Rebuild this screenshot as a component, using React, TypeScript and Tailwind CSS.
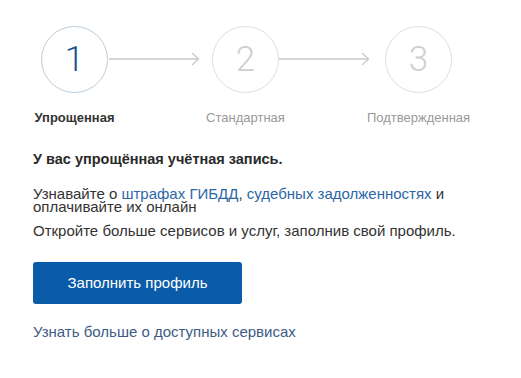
import React from "react";

function Arrow({ w }: { w: number }) {
  return (
    <svg width={w} height="14" viewBox={`0 0 ${w} 14`} className="shrink-0">
      <line x1="0" y1="7" x2={w - 1} y2="7" stroke="#c9c9c9" strokeWidth="1.3" />
      <polyline points={`${w - 8},1 ${w - 1.5},7 ${w - 8},13`} fill="none" stroke="#c9c9c9" strokeWidth="1.3" />
    </svg>
  );
}

function Step({ n, label, active }: { n: string; label: string; active?: boolean }) {
  return (
    <div className="flex flex-col items-center w-[67px] shrink-0">
      <div
        className={`w-[67px] h-[67px] rounded-full border-[1.5px] flex items-center justify-center ${
          active ? "border-[#b9cddb] text-[#17508c]" : "border-[#dedede] text-[#d0d0d0]"
        }`}
      >
        <span className="text-[35px] font-light leading-none" style={{ fontFamily: "Roboto, sans-serif" }}>
          {n}
        </span>
      </div>
      <div
        className={`mt-[17px] whitespace-nowrap text-[13px] leading-[16px] ${
          active ? "font-bold text-[#333]" : "text-[#999]"
        }`}
      >
        {label}
      </div>
    </div>
  );
}

export default function App() {
  return (
    <div className="w-[521px] h-[378px] bg-white" style={{ fontFamily: '"Liberation Sans", Arial, sans-serif' }}>
      <div className="pt-[26px] pl-[41px] flex items-start">
        <Step n="1" label="Упрощенная" active />
        <div className="mt-[26px] ml-[1px]">
          <Arrow w={91} />
        </div>
        <div className="ml-[12px]">
          <Step n="2" label="Стандартная" />
        </div>
        <div className="mt-[26px]">
          <Arrow w={91} />
        </div>
        <div className="ml-[15px]">
          <Step n="3" label="Подтвержденная" />
        </div>
      </div>
      <div className="pl-[33px] text-[#333]">
        <div className="mt-[25px] text-[14.5px] leading-[17px] font-bold text-[#2a2a2a]">У вас упрощённая учётная запись.</div>
        <p className="mt-[19px] text-[15px] leading-[13px] w-[450px]">
          Узнавайте о <span className="text-[#2c67a6]">штрафах ГИБДД</span>,{" "}
          <span className="text-[#2c67a6]">судебных задолженностях</span> и оплачивайте их онлайн
        </p>
        <p className="mt-[11px] text-[15px] leading-[13px]">Откройте больше сервисов и услуг, заполнив свой профиль.</p>
        <button className="mt-[25px] w-[209px] h-[42px] rounded-[3px] bg-[#0b5ca8] text-white text-[15px] flex items-center justify-center">
          Заполнить профиль
        </button>
        <div className="mt-[19px] text-[15px] leading-[17px] text-[#3d5b85]">Узнать больше о доступных сервисах</div>
      </div>
    </div>
  );
}
